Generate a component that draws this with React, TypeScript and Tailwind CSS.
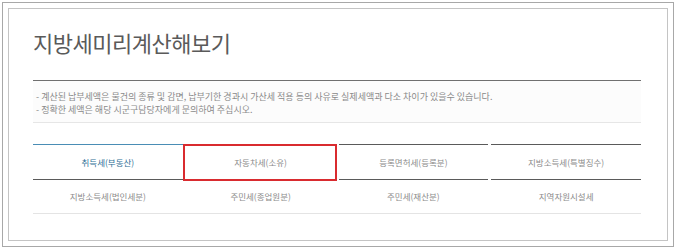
import React from "react";

const row1 = ["취득세(부동산)", "자동차세(소유)", "등록면허세(등록분)", "지방소득세(특별징수)"];
const row2 = ["지방소득세(법인세분)", "주민세(종업원분)", "주민세(재산분)", "지역자원시설세"];

export default function App() {
  return (
    <div
      className="w-[675px] h-[249px] bg-white pt-[2px] pl-[2px]"
      style={{ fontFamily: '"Noto Sans CJK KR", "Noto Sans", sans-serif' }}
    >
      <div className="w-[672px] h-[245px] border border-[#a8a8a8] p-[5px]">
        <div className="h-full border border-[#c4c4c4] pl-[24px] pr-[26px] pt-[20px]">
          <h1 className="text-[22px] leading-[26px] tracking-[-0.5px] text-[#5a5a5a] font-normal">
            지방세미리계산해보기
          </h1>
          <div className="mt-[25px] border-t border-[#707070] border-b border-b-[#e6e6e6] bg-[#fcfcfc] pl-[3px] pt-[9px] pb-[6px] text-[9px] leading-[13px] text-[#8a8a8a]">
            <p>- 계산된 납부세액은 물건의 종류 및 감면, 납부기한 경과시 가산세 적용 등의 사유로 실제세액과 다소 차이가 있을수 있습니다.</p>
            <p>- 정확한 세액은 해당 시군구담당자에게 문의하여 주십시오.</p>
          </div>
          <div className="mt-[21px] border-b border-[#e4e4e4]">
            <div className="grid grid-cols-4 gap-x-[3px]">
              {row1.map((t, i) => (
                <div
                  key={t}
                  className={
                    i === 0
                      ? "relative h-[35px] border-t border-[#4a8db5] flex items-center justify-center text-[8.5px] text-[#2f6f96]"
                      : "relative h-[35px] border-t border-[#5a5a5a] flex items-center justify-center text-[8.5px] text-[#8a8a8a]"
                  }
                >
                  {t}
                  {i === 1 && (
                    <div className="absolute -left-[3px] -right-[1px] -top-[1px] -bottom-[2px] border-[2.5px] border-[#d92b2f]" />
                  )}
                </div>
              ))}
              {row2.map((t) => (
                <div
                  key={t}
                  className="h-[34px] border-t border-[#5a5a5a] flex items-center justify-center text-[8.5px] text-[#8a8a8a]"
                >
                  {t}
                </div>
              ))}
            </div>
          </div>
        </div>
      </div>
    </div>
  );
}
